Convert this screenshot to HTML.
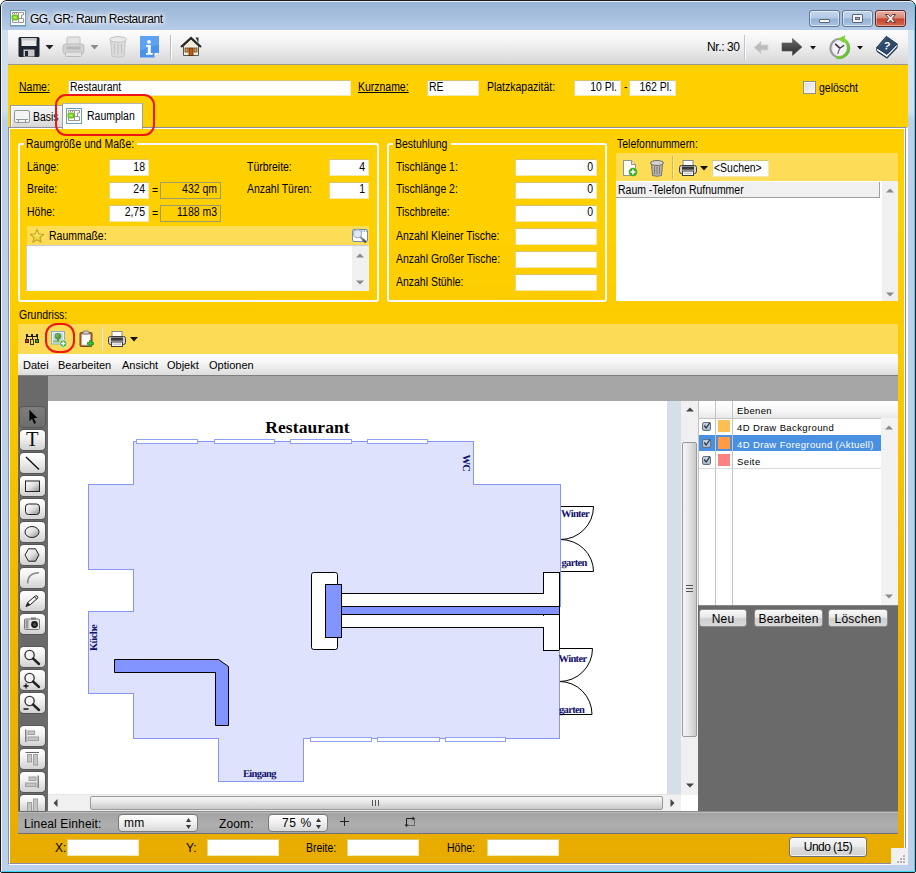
<!DOCTYPE html>
<html>
<head>
<meta charset="utf-8">
<title>GG, GR: Raum Restaurant</title>
<style>
*{box-sizing:border-box;margin:0;padding:0}
html,body{width:916px;height:873px;overflow:hidden;background:#fff}
body{font-family:"Liberation Sans",sans-serif;font-size:11px;color:#000;position:relative}
.a{position:absolute}
.t{position:absolute;white-space:nowrap;margin-top:1px;line-height:13px;height:13px;font-size:12px;transform:scaleX(.872);transform-origin:0 0}
.in{position:absolute;background:#fff;border:1px solid #f4e9b0;border-top-color:#d9c36a;border-left-color:#e6d489;font-size:12px;line-height:12px;white-space:nowrap;overflow:hidden}
.in>i,.ro>i{display:block;font-style:normal;transform:scaleX(.872)}
.r>i,.ro>i{transform-origin:100% 0}
.l>i{transform-origin:0 0}
.r{text-align:right;padding-right:3px}
.l{padding-left:1px}
.ro{position:absolute;border:1px solid #a39a6a;font-size:12px;line-height:12px;text-align:right;padding-right:3px;white-space:nowrap}
#win{left:0;top:0;width:916px;height:873px;border-radius:7px 7px 2px 2px;background:linear-gradient(#98b2d4 0px,#b6cde9 30px,#bcd1e9 120px,#bcd1e9 873px);border:1px solid #1a1a1a;overflow:hidden}
#client{left:8px;top:30px;width:900px;height:835px;background:linear-gradient(#ffd000 0px,#ffd000 200px,#f8c800 380px,#eeb600 600px,#e8ac00 835px)}
</style>
</head>
<body>
<div id="win" class="a"></div>
<div class="a" style="left:1px;top:1px;width:914px;height:871px;border-radius:6px 6px 1px 1px;border:1px solid rgba(255,255,255,.8);border-right-color:#38d8f8;border-bottom-color:#38d8f8"></div>
<div class="a" style="left:908px;top:30px;width:6px;height:90px;background:linear-gradient(#d6e3f2,#d4e1f1 90%,#bcd1e9)"></div>
<div class="a" style="left:2px;top:30px;width:6px;height:90px;background:linear-gradient(#d0dff0,#cfdef0 90%,#bcd1e9)"></div>
<div id="client" class="a">
<!--TOOLBAR-->
<div class="a" style="left:0;top:0;width:900px;height:35px;background:linear-gradient(#fdfdfd 0,#f3f3f3 35%,#e2e2e2 75%,#d6d6d6 100%);border-bottom:1px solid #8e8e8e"></div>
<div class="a" style="left:0;top:34px;width:900px;height:1px;background:#9a9a8a"></div>
<!-- floppy -->
<svg class="a" style="left:10px;top:6px" width="23" height="22" viewBox="0 0 23 22"><rect x=".5" y="1" width="21" height="20" rx="1.500" fill="#1d2532"/><rect x="3.500" y="2" width="15" height="8" fill="#e9e9e9"/><rect x="3.500" y="2" width="15" height="2.500" fill="#c9c9c9"/><rect x="5.500" y="13.500" width="11" height="7" fill="#c8c8c8"/><rect x="7" y="15" width="3" height="5" fill="#1d2532"/></svg>
<svg class="a" style="left:37px;top:15px" width="9" height="5" viewBox="0 0 9 5"><path d="M.5 0H8.500L4.500 4.500Z" fill="#222"/></svg>
<!-- printer grey -->
<svg class="a" style="left:54px;top:6px" width="23" height="22" viewBox="0 0 23 22"><rect x="5" y="1" width="13" height="9" rx="1" fill="#e4e4e4" stroke="#c2c2c2"/><rect x="1" y="8" width="21" height="10" rx="3" fill="#d2d2d2" stroke="#bdbdbd"/><rect x="4.500" y="10.500" width="14" height="3" fill="#b9b9b9"/><rect x="3.500" y="16" width="16" height="4.500" rx="1" fill="#e2e2e2" stroke="#bbb"/></svg>
<svg class="a" style="left:82px;top:15px" width="9" height="5" viewBox="0 0 9 5"><path d="M.5 0H8.500L4.500 4.500Z" fill="#8c8c8c"/></svg>
<!-- trash grey -->
<svg class="a" style="left:100px;top:5px" width="20" height="23" viewBox="0 0 20 23"><path d="M2.500 5L4 21.500Q10 23 16 21.500L17.500 5Z" fill="#dcdcdc" stroke="#c4c4c4"/><ellipse cx="10" cy="4.500" rx="8.500" ry="2.800" fill="#e9e9e9" stroke="#c0c0c0"/><path d="M6.500 9V19M10 9V19.500M13.500 9V19" stroke="#c3c3c3" stroke-width="1.200"/></svg>
<!-- info -->
<svg class="a" style="left:132px;top:6px" width="20" height="22" viewBox="0 0 20 22"><path d="M0 0H19V17L14.500 21.500H0Z" fill="#4b93ea"/><path d="M19 17H14.500V21.500Z" fill="#f2f6fb"/><path d="M0 0H19V9Q9 10 0 15Z" fill="#5ea2f2"/><circle cx="9" cy="5.800" r="1.900" fill="#fff"/><path d="M6 9H10.800V17H12.800V18.800H6V17H7.800V10.800H6Z" fill="#fff"/></svg>
<div class="a" style="left:162px;top:5px;width:1px;height:25px;background:#bdbdbd;border-right:1px solid #fbfbfb;box-sizing:content-box"></div>
<!-- home -->
<svg class="a" style="left:172px;top:6px" width="22" height="21" viewBox="0 0 22 21"><path d="M15.500 1.500H18.500V7Z" fill="#333"/><path d="M3.500 10V19.500H18.500V10L11 3Z" fill="#f3ecd8" stroke="#555" stroke-width="1"/><path d="M1 11L11 2L21 11" fill="none" stroke="#2a2a2a" stroke-width="2.200" stroke-linejoin="miter"/><rect x="9" y="12" width="4" height="7.500" fill="#c85a10" stroke="#5a2a08" stroke-width=".8"/><rect x="5" y="12" width="3" height="4" fill="#d59a4e" stroke="#5a3a18" stroke-width=".7"/><rect x="14" y="12" width="3" height="4" fill="#d59a4e" stroke="#5a3a18" stroke-width=".7"/></svg>
<!-- right side -->
<div class="a" style="left:699px;top:10px;font-size:12px;line-height:15px;letter-spacing:-.4px;white-space:nowrap">Nr.: 30</div>
<div class="a" style="left:736px;top:5px;width:1px;height:25px;background:#c4c4c4;border-right:1px solid #fbfbfb;box-sizing:content-box"></div>
<svg class="a" style="left:745px;top:10px" width="16" height="15" viewBox="0 0 16 15"><path d="M1 7.500L8 1.500V5H15V10H8V13.500Z" fill="#bcbcbc" stroke="#d3d3d3" stroke-width=".8"/></svg>
<svg class="a" style="left:773px;top:7px" width="22" height="20" viewBox="0 0 22 20"><defs><linearGradient id="ga" x1="0" y1="0" x2="0" y2="1"><stop offset="0" stop-color="#6a6a6a"/><stop offset="1" stop-color="#2c2c2c"/></linearGradient></defs><path d="M21 10L11.500 1.500V6H1V14H11.500V18.500Z" fill="url(#ga)" stroke="#555" stroke-width=".6"/></svg>
<svg class="a" style="left:802px;top:16px" width="6" height="4" viewBox="0 0 6 4"><path d="M0 0H6L3 3.500Z" fill="#111"/></svg>
<!-- clock -->
<svg class="a" style="left:820px;top:4px" width="25" height="26" viewBox="0 0 25 26"><defs><linearGradient id="cg" x1="0" y1="0" x2="1" y2="1"><stop offset="0" stop-color="#9be255"/><stop offset="1" stop-color="#5cba28"/></linearGradient></defs><circle cx="11.800" cy="14.200" r="9.300" fill="#f4f2f8" stroke="#9a9a9a" stroke-width="2.400"/><circle cx="11.800" cy="14.200" r="7.800" fill="none" stroke="#e4dcf0" stroke-width="1"/><path d="M8.500 23.600A10 10 0 0 0 15.200 5" fill="none" stroke="url(#cg)" stroke-width="3"/><path d="M17 1.200L9.800 4.800L16.200 9.300Z" fill="#7fd43a"/><path d="M11.800 14.200L7.200 9.800" stroke="#3a3a3a" stroke-width="1.700"/><path d="M11.800 14.200L16.200 11.200" stroke="#3a3a3a" stroke-width="1.300"/><path d="M11.800 14.200L9.600 20" stroke="#666" stroke-width="1.200"/></svg>
<svg class="a" style="left:849px;top:16px" width="6" height="4" viewBox="0 0 6 4"><path d="M0 0H6L3 3.500Z" fill="#111"/></svg>
<!-- book -->
<svg class="a" style="left:867px;top:5px" width="24" height="24" viewBox="0 0 24 24"><path d="M1.600 12.600L12 19.300L22.200 8.900V12L12 22.800L1.600 15.800Z" fill="#f1f4f7" stroke="#27425e" stroke-width=".9"/><path d="M2 16.200L12 23L22.200 12.200" fill="none" stroke="#27425e" stroke-width="1.300"/><path d="M1.600 12.600L11.300 1.300L22.200 8.900L12 19.300Z" fill="#2d4b6c" stroke="#21384f" stroke-width=".9"/><path d="M3.500 12.300L11.500 3" stroke="#41627f" stroke-width="1"/><text x="9" y="14.300" font-family="Liberation Sans" font-weight="bold" font-size="10.500" fill="#fff" transform="rotate(10 12 10)">?</text></svg>

<!--FORM-->
<div class="t" style="left:11px;top:50px;text-decoration:underline">Name:</div>
<div class="in l" style="left:60px;top:50px;width:283px;height:16px"><i>Restaurant</i></div>
<div class="t" style="left:350px;top:50px;text-decoration:underline">Kurzname:</div>
<div class="in l" style="left:419px;top:50px;width:52px;height:16px"><i>RE</i></div>
<div class="t" style="left:479px;top:50px">Platzkapazität:</div>
<div class="in r" style="left:566px;top:50px;width:47px;height:16px"><i>10 Pl.</i></div>
<div class="t" style="left:616px;top:50px">-</div>
<div class="in r" style="left:621px;top:50px;width:47px;height:16px"><i>162 Pl.</i></div>
<div class="a" style="left:795px;top:51px;width:13px;height:13px;border:1px solid #8e8f8f;background:linear-gradient(135deg,#dcdcdc,#f6f6f6);box-shadow:inset 0 0 0 1px #f4f4f4"></div>
<div class="t" style="left:811px;top:51px">gelöscht</div>

<!--TABS-->
<div class="a" style="left:0;top:97px;width:900px;height:738px;border:1px solid #8e8ea2;border-right:2px solid #fff;border-bottom:1px solid #fff"><div class="a" style="left:0;top:0;right:0;bottom:0;border:1px solid #fff;border-right:1px solid #8e8ea2;border-bottom:1px solid #8e8ea2"><div class="a" style="right:0;top:0;width:1px;bottom:0;background:#fff"></div></div></div>
<div class="a" style="left:2px;top:75px;width:53px;height:22px;border:1px solid #9a9a9a;border-bottom:none;background:linear-gradient(#f6f6f6,#ececec 50%,#d6d6d6);box-shadow:inset 1px 1px 0 #fff"></div>
<svg class="a" style="left:6px;top:80px" width="16" height="14" viewBox="0 0 16 14"><rect x=".5" y=".5" width="15" height="12" rx="1.500" fill="#f4f4f4" stroke="#8f9a9a"/><path d="M2 9.500H14M4.500 9.500V12M11.500 9.500V12" stroke="#8f9a9a"/></svg>
<div class="t" style="left:25px;top:80px">Basis</div>
<div class="a" style="left:54px;top:73px;width:81px;height:26px;border:1px solid #9c9c9c;border-top-color:#b2b2b2;border-bottom:none;background:#fff"></div>
<div class="a" style="left:58px;top:78px;width:16px;height:16px;background:#fff;border:1px solid #6b9dba">
<svg class="a" style="left:0;top:0" width="14" height="14" viewBox="0 0 14 14"><path d="M1.500 3.500V1.500H7.500V11.500H1.500V9M3.500 1.500V3M5.500 1.500V3M7.500 1.500H12.500V4H10.500V7.500H8M7.500 7.500H12.500V11.500H7.500" fill="none" stroke="#9a9796" stroke-width="1"/><rect x="1" y="4" width="6" height="5" rx="1.300" fill="#7fd321" stroke="#5aa811" stroke-width=".8"/><rect x="2.500" y="5.500" width="3" height="2" fill="#b5f060"/></svg></div>
<div class="t" style="left:79px;top:79px">Raumplan</div>
<div class="a" style="left:47px;top:64px;width:100px;height:42px;border:2px solid #f01414;border-radius:11px"></div>

<!--GROUPS-->
<!-- group 1 -->
<div class="a" style="left:10px;top:113px;width:361px;height:159px;border:2px solid #f6f8ff;border-radius:3px"></div>
<div class="a" style="left:16px;top:107px;width:113px;height:14px;background:#ffd000"></div>
<div class="t" style="left:18px;top:107px">Raumgröße und Maße:</div>
<div class="t" style="left:19px;top:130px">Länge:</div>
<div class="in r" style="left:101px;top:129px;width:40px;height:17px;padding-top:1px"><i>18</i></div>
<div class="t" style="left:19px;top:152px">Breite:</div>
<div class="in r" style="left:101px;top:152px;width:40px;height:17px;padding-top:0px"><i>24</i></div>
<div class="t" style="left:144px;top:153px">=</div>
<div class="ro" style="left:152px;top:152px;width:61px;height:17px;padding-top:0px"><i>432 qm</i></div>
<div class="t" style="left:19px;top:175px">Höhe:</div>
<div class="in r" style="left:101px;top:175px;width:40px;height:17px;padding-top:0px"><i>2,75</i></div>
<div class="t" style="left:144px;top:176px">=</div>
<div class="ro" style="left:152px;top:175px;width:61px;height:17px;padding-top:0px"><i>1188 m3</i></div>
<div class="t" style="left:239px;top:130px">Türbreite:</div>
<div class="in r" style="left:321px;top:129px;width:40px;height:17px;padding-top:1px"><i>4</i></div>
<div class="t" style="left:239px;top:152px">Anzahl Türen:</div>
<div class="in r" style="left:321px;top:152px;width:40px;height:17px;padding-top:0px"><i>1</i></div>
<div class="a" style="left:19px;top:196px;width:342px;height:19px;background:#fddc58"></div>
<svg class="a" style="left:21px;top:198px" width="16" height="16" viewBox="0 0 16 16"><defs><linearGradient id="sg" x1="0" y1="0" x2="0" y2="1"><stop offset="0" stop-color="#fff68a"/><stop offset="1" stop-color="#e2cc18"/></linearGradient></defs><path d="M8 1.500L9.900 6L14.600 6.400L11 9.500L12.200 14.300L8 11.700L3.800 14.300L5 9.500L1.400 6.400L6.100 6Z" fill="url(#sg)" stroke="#c6a326" stroke-width="1.100" stroke-linejoin="round"/></svg>
<div class="t" style="left:41px;top:199px">Raummaße:</div>
<svg class="a" style="left:344px;top:198px" width="17" height="16" viewBox="0 0 17 16"><rect x=".5" y="1.500" width="15" height="12" rx="1.500" fill="#fdfdfd" stroke="#6e8fb3"/><path d="M1.500 3H15" stroke="#8aa6c6" stroke-width="1.400" stroke-dasharray="1.500 1"/><circle cx="5.500" cy="5.800" r="4" fill="#dfeaf7" stroke="#a4aebb" stroke-width="1.100"/><path d="M8.500 9L13.500 14" stroke="#8a8f96" stroke-width="2.200"/><path d="M11 11.500L14 14.500" stroke="#55595e" stroke-width="2.200"/></svg>
<div class="a" style="left:18px;top:215px;width:343px;height:46px;background:#fff;border:1px solid #c9cbd6;border-right-color:#f1f1f6;border-bottom-color:#f1f1f6"></div>
<div class="a" style="left:344px;top:216px;width:16px;height:44px;background:#f0f0f0"></div>
<svg class="a" style="left:348px;top:223px" width="8" height="5" viewBox="0 0 8 5"><path d="M0 4.500H8L4 .5Z" fill="#8a8a8a"/></svg>
<svg class="a" style="left:348px;top:250px" width="8" height="5" viewBox="0 0 8 5"><path d="M0 .5H8L4 4.500Z" fill="#8a8a8a"/></svg>
<!-- group 2 -->
<div class="a" style="left:379px;top:113px;width:220px;height:159px;border:2px solid #f6f8ff;border-radius:3px"></div>
<div class="a" style="left:385px;top:107px;width:58px;height:14px;background:#ffd000"></div>
<div class="t" style="left:387px;top:107px">Bestuhlung</div>
<div class="t" style="left:388px;top:130px">Tischlänge 1:</div>
<div class="in r" style="left:507px;top:129px;width:82px;height:17px;padding-top:1px"><i>0</i></div>
<div class="t" style="left:388px;top:152px">Tischlänge 2:</div>
<div class="in r" style="left:507px;top:152px;width:82px;height:17px;padding-top:0px"><i>0</i></div>
<div class="t" style="left:388px;top:175px">Tischbreite:</div>
<div class="in r" style="left:507px;top:175px;width:82px;height:17px;padding-top:0px"><i>0</i></div>
<div class="t" style="left:388px;top:199px">Anzahl Kleiner Tische:</div>
<div class="in r" style="left:507px;top:198px;width:82px;height:17px"></div>
<div class="t" style="left:388px;top:222px">Anzahl Großer Tische:</div>
<div class="in r" style="left:507px;top:221px;width:82px;height:17px"></div>
<div class="t" style="left:388px;top:245px">Anzahl Stühle:</div>
<div class="in r" style="left:507px;top:244px;width:82px;height:17px"></div>
<!-- telefon -->
<div class="t" style="left:609px;top:107px">Telefonnummern:</div>
<div class="a" style="left:608px;top:123px;width:282px;height:29px;background:#fddc58"></div>
<svg class="a" style="left:614px;top:129px" width="16" height="18" viewBox="0 0 16 18"><path d="M1.500 1.500H9.500L13.500 5.500V16.500H1.500Z" fill="#fdfdf6" stroke="#8f9682"/><path d="M9.500 1.500V5.500H13.500" fill="#e2e6d4" stroke="#8f9682"/><circle cx="11" cy="13" r="4.300" fill="#3fae2a"/><path d="M11 10.500V15.500M8.500 13H13.500" stroke="#fff" stroke-width="1.600"/></svg>
<svg class="a" style="left:641px;top:129px" width="16" height="18" viewBox="0 0 16 18"><path d="M2.500 5L3.500 16.500Q8 18 12.500 16.500L13.500 5Z" fill="#b9b4ad" stroke="#77726c"/><ellipse cx="8" cy="4" rx="6.500" ry="2.500" fill="#d6d2cc" stroke="#6f6a64"/><path d="M5.500 7.500V15M8 7.500V15.500M10.500 7.500V15" stroke="#7d7872" stroke-width="1"/></svg>
<div class="a" style="left:664px;top:126px;width:1px;height:23px;background:#d9b94a;border-right:1px solid #fde99a;box-sizing:content-box"></div>
<svg class="a" style="left:671px;top:130px" width="18" height="16" viewBox="0 0 18 16"><rect x="4" y=".5" width="10" height="6" fill="#fdfdfd" stroke="#8a8a8a"/><rect x=".5" y="5.500" width="17" height="8" rx="2" fill="#d4d4d4" stroke="#3c3c3c"/><rect x="3" y="6.500" width="12" height="3.200" fill="#3a3a3a"/><rect x="3.500" y="11" width="11" height="4.500" fill="#f6f6f6" stroke="#3c3c3c"/><path d="M5 13.200H13" stroke="#aaa" stroke-width=".8"/></svg>
<svg class="a" style="left:692px;top:136px" width="8" height="5" viewBox="0 0 8 5"><path d="M0 0H8L4 4.500Z" fill="#111"/></svg>
<div class="in l" style="left:704px;top:130px;width:57px;height:17px;padding-left:1px;padding-top:1px"><i>&lt;Suchen&gt;</i></div>
<div class="a" style="left:608px;top:151px;width:282px;height:120px;background:#fff"></div>
<div class="a" style="left:608px;top:152px;width:264px;height:16px;background:#f0f0f0;border-bottom:1px solid #a0a0a0;border-right:1px solid #a0a0a0"></div>
<div class="t" style="left:610px;top:153px">Raum -Telefon Rufnummer</div>
<div class="a" style="left:874px;top:151px;width:16px;height:120px;background:#f0f0f0"></div>
<svg class="a" style="left:878px;top:158px" width="8" height="5" viewBox="0 0 8 5"><path d="M0 4.500H8L4 .5Z" fill="#8a8a8a"/></svg>
<svg class="a" style="left:878px;top:262px" width="8" height="5" viewBox="0 0 8 5"><path d="M0 .5H8L4 4.500Z" fill="#8a8a8a"/></svg>
<!-- grundriss -->
<div class="t" style="left:11px;top:278px">Grundriss:</div>

<!--MAIN-->
<div class="a" style="left:10px;top:294px;width:880px;height:30px;background:#fbda56"></div>
<!-- grundriss toolbar icons -->
<svg class="a" style="left:17px;top:303px" width="15" height="13" viewBox="0 0 15 13" shape-rendering="crispEdges"><path d="M1.500 6V3.500H12.500V6M7 3.500V6" fill="none" stroke="#1a1a1a" stroke-width="1"/><rect x="1" y="1" width="2" height="2" fill="#1a1a1a"/><rect x="6" y="1" width="2" height="2" fill="#1a1a1a"/><rect x="11" y="1" width="2" height="2" fill="#1a1a1a"/><rect x=".5" y="6.500" width="3" height="3" fill="#ee2020" stroke="#3a2a1a" stroke-width="1"/><rect x="5.500" y="6.500" width="3" height="5" fill="#f5e010" stroke="#3a2a1a" stroke-width="1"/><rect x="10.500" y="6.500" width="3" height="3" fill="#20b030" stroke="#3a2a1a" stroke-width="1"/></svg>
<svg class="a" style="left:42px;top:300px" width="18" height="18" viewBox="0 0 18 18"><rect x="1.500" y="1.500" width="13" height="12.500" fill="#e6effa" stroke="#8ea8c8"/><rect x="3" y="3" width="10" height="9.500" fill="#bfd8f3"/><rect x="3" y="10.300" width="10" height="2.200" fill="#8cc36a"/><rect x="7.300" y="8.500" width="1.500" height="2.800" fill="#8a6a3a"/><circle cx="8" cy="6.300" r="3.300" fill="#5a9a3a"/><circle cx="7.300" cy="5.500" r="1.600" fill="#74b44e"/><circle cx="13.300" cy="13.600" r="3.700" fill="#4aa83a" stroke="#e8f4e0" stroke-width=".8"/><path d="M13.300 11.400V15.800M11.100 13.600H15.500" stroke="#fff" stroke-width="1.500"/></svg>
<svg class="a" style="left:71px;top:300px" width="16" height="18" viewBox="0 0 16 18"><rect x="1" y="2.500" width="12" height="14" rx="1.200" fill="#b3602a" stroke="#7a4518"/><rect x="2.800" y="4.500" width="8.400" height="10.500" fill="#fbfbfb" stroke="#cfcfcf" stroke-width=".6"/><rect x="4" y="1" width="6" height="3" rx="1" fill="#c9c9c9" stroke="#777" stroke-width=".8"/><path d="M10.500 10.500H12.500V12.500H14.500V14.500H12.500V16.500H10.500V14.500H8.500V12.500H10.500Z" fill="#35c435" stroke="#1b8a1b" stroke-width=".8"/></svg>
<div class="a" style="left:93px;top:297px;width:1px;height:24px;background:#e9d089;border-right:1px solid #f4ecd2;box-sizing:content-box"></div>
<svg class="a" style="left:100px;top:301px" width="18" height="16" viewBox="0 0 18 16"><rect x="4" y=".5" width="10" height="6" fill="#fdfdfd" stroke="#8a8a8a"/><rect x=".5" y="5.500" width="17" height="8" rx="2" fill="#d4d4d4" stroke="#3c3c3c"/><rect x="3" y="6.500" width="12" height="3.200" fill="#3a3a3a"/><rect x="3.500" y="11" width="11" height="4.500" fill="#f6f6f6" stroke="#3c3c3c"/><path d="M5 13.200H13" stroke="#aaa" stroke-width=".8"/></svg>
<svg class="a" style="left:122px;top:307px" width="8" height="5" viewBox="0 0 8 5"><path d="M0 0H8L4 4.500Z" fill="#111"/></svg>
<div class="a" style="left:37px;top:293px;width:30px;height:30px;border:2px solid #f01414;border-radius:12px"></div>
<!-- menubar -->
<div class="a" style="left:10px;top:324px;width:880px;height:22px;background:linear-gradient(#ffffff 0,#f6f6f6 40%,#dcdcdc 100%);border-bottom:1px solid #7f7f7f"></div>
<div class="a" style="left:15px;top:329px;font-size:11px;line-height:13px;white-space:nowrap;word-spacing:0">Datei</div>
<div class="a" style="left:50px;top:329px;font-size:11px;line-height:13px;white-space:nowrap">Bearbeiten</div>
<div class="a" style="left:114px;top:329px;font-size:11px;line-height:13px;white-space:nowrap">Ansicht</div>
<div class="a" style="left:159px;top:329px;font-size:11px;line-height:13px;white-space:nowrap">Objekt</div>
<div class="a" style="left:201px;top:329px;font-size:11px;line-height:13px;white-space:nowrap">Optionen</div>
<!-- grey area -->
<div class="a" style="left:10px;top:346px;width:880px;height:457px;background:#6a6a6a"></div>
<div class="a" style="left:40px;top:346px;width:850px;height:25px;background:#a6a6a6"></div>
<div class="a" style="left:10px;top:781px;width:880px;height:23px;background:linear-gradient(#bcbcbc 0,#bcbcbc 1px,#a3a3a3 1px,#aeaeae 60%,#a6a6a6 100%);border-top:1px solid #8c8c8c;border-bottom:1px solid #70707c"></div>
<!-- canvas -->
<div class="a" style="left:40px;top:371px;width:619px;height:394px;background:#fff"></div>
<div class="a" style="left:659px;top:371px;width:14px;height:394px;background:#d6deea"></div>
<!--PLAN-->
<svg class="a" style="left:40px;top:371px" width="634" height="394" viewBox="48 401 634 394" shape-rendering="crispEdges">
<path d="M133.500 441.500H473.500V484.500H560.500V606.500H559.500V738.500H303.500V781.500H218.500V738.500H133.500V693.500H88.500V611.500H133.500V569.500H88.500V484.500H133.500Z" fill="#dee2fd" stroke="#8596f6" stroke-width="1"/>
<g fill="#fff" stroke="#8fa0f6" stroke-width="1">
<rect x="136.500" y="439.500" width="61" height="4"/><rect x="214.500" y="439.500" width="60" height="4"/><rect x="290.500" y="439.500" width="61" height="4"/><rect x="367.500" y="439.500" width="60" height="4"/>
<rect x="310.500" y="737.500" width="61" height="4"/><rect x="377.500" y="737.500" width="62" height="4"/><rect x="445.500" y="737.500" width="60" height="4"/>
</g>
<!-- bar -->
<rect x="311.500" y="572.500" width="26" height="77" rx="2.200" fill="#fff" stroke="#000" shape-rendering="auto"/>
<path d="M341.500 593.500H543.500V572.500H559.500V650.500H543.500V627.500H341.500Z" fill="#fff" stroke="#000"/>
<rect x="342" y="607" width="218" height="7" fill="#8294ff"/>
<path d="M342 606.500H560M342 614.500H560M543.500 614V616M559.500 572V651" stroke="#000" fill="none"/>
<rect x="325.500" y="584.500" width="16" height="53" fill="#8294ff" stroke="#000"/>
<!-- L -->
<path d="M114.500 659.500H218.500L228.500 666.500V725.500H215.500V672.500H114.500Z" fill="#8294ff" stroke="#000" shape-rendering="auto"/>
<!-- doors -->
<g fill="#fff" stroke="#000" shape-rendering="auto">
<path d="M560.500 506.500H593.500A33 33 0 0 1 560.500 539.500Z"/>
<path d="M560.500 571.500H593.500A33 32 0 0 0 560.500 539.500Z"/>
<path d="M559.500 648.500H592.500A33 33 0 0 1 559.500 681.500Z"/>
<path d="M559.500 714.500H592A32.500 33 0 0 0 559.500 681.500Z"/>
</g>
<path d="M560.500 506V606M559.500 650V715" stroke="#8596f6"/>
<g font-family="Liberation Serif" font-weight="bold" fill="#10106a" font-size="10.500" letter-spacing="-.65" text-rendering="geometricPrecision">
<text x="561" y="517">Winter</text><text x="561.500" y="566">garten</text>
<text x="558.500" y="661.500">Winter</text><text x="559" y="712.500">garten</text>
<text x="243" y="776.500">Eingang</text>
<text transform="translate(462.500 454.500) rotate(90)">WC</text>
<text transform="translate(96.500 651) rotate(-90)">Küche</text>
</g>
<text x="307.500" y="433" text-anchor="middle" font-family="Liberation Serif" font-weight="bold" font-size="17.500" fill="#000" letter-spacing=".1">Restaurant</text>
</svg>

<!-- tools -->
<div class="a" style="left:12px;top:377px;width:25px;height:20px;border-radius:4px;background:linear-gradient(#7d7d7d,#747474 60%,#6c6c6c);box-shadow:0 0 0 1px rgba(70,70,70,.55);overflow:hidden"><svg class="a" style="left:0;top:0" width="25" height="20" viewBox="0 0 25 20"><path d="M9.400 2.800V14.200L12 11.700L14.100 16.700L16 15.900L13.900 11H17.400Z" fill="#050505"/></svg></div>
<div class="a" style="left:12px;top:400px;width:25px;height:20px;border-radius:4px;background:linear-gradient(#ffffff 0,#f2f2f2 40%,#dedede 75%,#d2d2d2 100%);box-shadow:0 0 0 1px rgba(60,60,60,.45);overflow:hidden"><svg class="a" style="left:0;top:0" width="25" height="20" viewBox="0 0 25 20"><text x="12.300" y="16.200" text-anchor="middle" font-family="Liberation Serif" font-size="20.500" fill="#111">T</text></svg></div>
<div class="a" style="left:12px;top:423px;width:25px;height:20px;border-radius:4px;background:linear-gradient(#ffffff 0,#f2f2f2 40%,#dedede 75%,#d2d2d2 100%);box-shadow:0 0 0 1px rgba(60,60,60,.45);overflow:hidden"><svg class="a" style="left:0;top:0" width="25" height="20" viewBox="0 0 25 20"><path d="M6 4L19 16.400" stroke="#111" stroke-width="1.400"/></svg></div>
<div class="a" style="left:12px;top:446px;width:25px;height:20px;border-radius:4px;background:linear-gradient(#ffffff 0,#f2f2f2 40%,#dedede 75%,#d2d2d2 100%);box-shadow:0 0 0 1px rgba(60,60,60,.45);overflow:hidden"><svg class="a" style="left:0;top:0" width="25" height="20" viewBox="0 0 25 20"><defs><linearGradient id="gr3" x1="0" y1="0" x2="1" y2="1"><stop offset="0" stop-color="#fff"/><stop offset=".5" stop-color="#e0e0e0"/><stop offset="1" stop-color="#8a8a8a"/></linearGradient></defs><rect x="5.500" y="5" width="14" height="10.500" fill="url(#gr3)" stroke="#222"/></svg></div>
<div class="a" style="left:12px;top:469px;width:25px;height:20px;border-radius:4px;background:linear-gradient(#ffffff 0,#f2f2f2 40%,#dedede 75%,#d2d2d2 100%);box-shadow:0 0 0 1px rgba(60,60,60,.45);overflow:hidden"><svg class="a" style="left:0;top:0" width="25" height="20" viewBox="0 0 25 20"><defs><linearGradient id="gr4" x1="0" y1="0" x2="1" y2="1"><stop offset="0" stop-color="#fff"/><stop offset=".5" stop-color="#e0e0e0"/><stop offset="1" stop-color="#8a8a8a"/></linearGradient></defs><rect x="5.500" y="5" width="14" height="10.500" rx="3" fill="url(#gr4)" stroke="#222"/></svg></div>
<div class="a" style="left:12px;top:492px;width:25px;height:20px;border-radius:4px;background:linear-gradient(#ffffff 0,#f2f2f2 40%,#dedede 75%,#d2d2d2 100%);box-shadow:0 0 0 1px rgba(60,60,60,.45);overflow:hidden"><svg class="a" style="left:0;top:0" width="25" height="20" viewBox="0 0 25 20"><defs><linearGradient id="gr5" x1="0" y1="0" x2="1" y2="1"><stop offset="0" stop-color="#fff"/><stop offset=".5" stop-color="#e0e0e0"/><stop offset="1" stop-color="#8a8a8a"/></linearGradient></defs><ellipse cx="12" cy="10" rx="7" ry="5.500" fill="url(#gr5)" stroke="#222"/></svg></div>
<div class="a" style="left:12px;top:515px;width:25px;height:20px;border-radius:4px;background:linear-gradient(#ffffff 0,#f2f2f2 40%,#dedede 75%,#d2d2d2 100%);box-shadow:0 0 0 1px rgba(60,60,60,.45);overflow:hidden"><svg class="a" style="left:0;top:0" width="25" height="20" viewBox="0 0 25 20"><defs><linearGradient id="gr6" x1="0" y1="0" x2="1" y2="1"><stop offset="0" stop-color="#fff"/><stop offset=".5" stop-color="#e0e0e0"/><stop offset="1" stop-color="#8a8a8a"/></linearGradient></defs><path d="M8.500 3.800H15.500L19 10L15.500 16.200H8.500L5 10Z" fill="url(#gr6)" stroke="#222"/></svg></div>
<div class="a" style="left:12px;top:538px;width:25px;height:20px;border-radius:4px;background:linear-gradient(#ffffff 0,#f2f2f2 40%,#dedede 75%,#d2d2d2 100%);box-shadow:0 0 0 1px rgba(60,60,60,.45);overflow:hidden"><svg class="a" style="left:0;top:0" width="25" height="20" viewBox="0 0 25 20"><path d="M7.600 15.500Q7.600 5 19 4.800" fill="none" stroke="#8a8a8a" stroke-width="1.500"/></svg></div>
<div class="a" style="left:12px;top:561px;width:25px;height:20px;border-radius:4px;background:linear-gradient(#ffffff 0,#f2f2f2 40%,#dedede 75%,#d2d2d2 100%);box-shadow:0 0 0 1px rgba(60,60,60,.45);overflow:hidden"><svg class="a" style="left:0;top:0" width="25" height="20" viewBox="0 0 25 20"><path d="M6 15.500L7.800 11.300L15.500 4.800Q17.500 4.200 18 6.800L10.200 13.800Z" fill="#f4f4f4" stroke="#222" stroke-width="1"/><path d="M6 15.500L7.800 11.300L10.200 13.800Z" fill="#222"/><path d="M14.300 5.800L16.800 8" stroke="#222" stroke-width="1"/></svg></div>
<div class="a" style="left:12px;top:584px;width:25px;height:20px;border-radius:4px;background:linear-gradient(#ffffff 0,#f2f2f2 40%,#dedede 75%,#d2d2d2 100%);box-shadow:0 0 0 1px rgba(60,60,60,.45);overflow:hidden"><svg class="a" style="left:0;top:0" width="25" height="20" viewBox="0 0 25 20"><rect x="4.500" y="5" width="15" height="10.500" rx="1" fill="#e2e2e2" stroke="#777"/><rect x="5.500" y="6" width="3" height="8.500" fill="#999"/><rect x="11" y="3.500" width="5" height="2" fill="#777"/><circle cx="14.500" cy="10.500" r="3.400" fill="#1a1a1a"/><circle cx="14.500" cy="10.500" r="1.500" fill="#555"/></svg></div>
<div class="a" style="left:12px;top:617px;width:25px;height:20px;border-radius:4px;background:linear-gradient(#ffffff 0,#f2f2f2 40%,#dedede 75%,#d2d2d2 100%);box-shadow:0 0 0 1px rgba(60,60,60,.45);overflow:hidden"><svg class="a" style="left:0;top:0" width="25" height="20" viewBox="0 0 25 20"><circle cx="9.600" cy="8" r="4.600" fill="#f2f2f2" stroke="#3a3a3a" stroke-width="1.400"/><path d="M7 6.500A3 3 0 0 1 11 5.500" fill="none" stroke="#fff" stroke-width="1"/><path d="M13 11.500L19 17" stroke="#222" stroke-width="2.400" stroke-linecap="round"/></svg></div>
<div class="a" style="left:12px;top:640px;width:25px;height:20px;border-radius:4px;background:linear-gradient(#ffffff 0,#f2f2f2 40%,#dedede 75%,#d2d2d2 100%);box-shadow:0 0 0 1px rgba(60,60,60,.45);overflow:hidden"><svg class="a" style="left:0;top:0" width="25" height="20" viewBox="0 0 25 20"><circle cx="9.600" cy="8" r="4.600" fill="#f2f2f2" stroke="#3a3a3a" stroke-width="1.400"/><path d="M7 6.500A3 3 0 0 1 11 5.500" fill="none" stroke="#fff" stroke-width="1"/><path d="M13 11.500L19 17" stroke="#222" stroke-width="2.400" stroke-linecap="round"/><path d="M3.500 16H8.500M6 13.500V18.500" stroke="#111" stroke-width="1.300"/></svg></div>
<div class="a" style="left:12px;top:663px;width:25px;height:20px;border-radius:4px;background:linear-gradient(#ffffff 0,#f2f2f2 40%,#dedede 75%,#d2d2d2 100%);box-shadow:0 0 0 1px rgba(60,60,60,.45);overflow:hidden"><svg class="a" style="left:0;top:0" width="25" height="20" viewBox="0 0 25 20"><circle cx="9.600" cy="8" r="4.600" fill="#f2f2f2" stroke="#3a3a3a" stroke-width="1.400"/><path d="M7 6.500A3 3 0 0 1 11 5.500" fill="none" stroke="#fff" stroke-width="1"/><path d="M13 11.500L19 17" stroke="#222" stroke-width="2.400" stroke-linecap="round"/><path d="M3.500 16H8.500" stroke="#111" stroke-width="1.300"/></svg></div>
<div class="a" style="left:12px;top:696px;width:25px;height:20px;border-radius:4px;background:linear-gradient(#ffffff 0,#f2f2f2 40%,#dedede 75%,#d2d2d2 100%);box-shadow:0 0 0 1px rgba(60,60,60,.45);overflow:hidden"><svg class="a" style="left:0;top:0" width="25" height="20" viewBox="0 0 25 20"><path d="M5.800 3.500V16" stroke="#666" stroke-width="1.200"/><rect x="8" y="5" width="6.500" height="3.500" fill="#c4c4c4" stroke="#a0a0a0"/><rect x="8" y="11" width="10.500" height="3.500" fill="#c4c4c4" stroke="#a0a0a0"/></svg></div>
<div class="a" style="left:12px;top:719px;width:25px;height:20px;border-radius:4px;background:linear-gradient(#ffffff 0,#f2f2f2 40%,#dedede 75%,#d2d2d2 100%);box-shadow:0 0 0 1px rgba(60,60,60,.45);overflow:hidden"><svg class="a" style="left:0;top:0" width="25" height="20" viewBox="0 0 25 20"><path d="M5.500 3.500H19" stroke="#666" stroke-width="1.200"/><rect x="7.500" y="5.500" width="4" height="7.500" fill="#c4c4c4" stroke="#a0a0a0"/><rect x="13.500" y="5.500" width="4" height="10.500" fill="#c4c4c4" stroke="#a0a0a0"/></svg></div>
<div class="a" style="left:12px;top:742px;width:25px;height:20px;border-radius:4px;background:linear-gradient(#ffffff 0,#f2f2f2 40%,#dedede 75%,#d2d2d2 100%);box-shadow:0 0 0 1px rgba(60,60,60,.45);overflow:hidden"><svg class="a" style="left:0;top:0" width="25" height="20" viewBox="0 0 25 20"><path d="M18.200 3.500V16" stroke="#666" stroke-width="1.200"/><rect x="9" y="5" width="7" height="3.500" fill="#c4c4c4" stroke="#a0a0a0"/><rect x="5.500" y="11" width="10.500" height="3.500" fill="#c4c4c4" stroke="#a0a0a0"/></svg></div>
<div class="a" style="left:12px;top:765px;width:25px;height:16px;border-radius:4px 4px 0 0;background:linear-gradient(#ffffff 0,#f2f2f2 40%,#dedede 75%,#d2d2d2 100%);box-shadow:0 0 0 1px rgba(60,60,60,.45);overflow:hidden"><svg class="a" style="left:0;top:0" width="25" height="20" viewBox="0 0 25 20"><rect x="7.500" y="7.500" width="4" height="10" fill="#c4c4c4" stroke="#a0a0a0"/><rect x="13.500" y="4" width="4" height="14" fill="#c4c4c4" stroke="#a0a0a0"/></svg></div>
<div class="a" style="left:40px;top:764px;width:650px;height:17px;background:#f0f0f0;border-top:1px solid #e6e6e6"></div>
<div class="a" style="left:673px;top:764px;width:17px;height:17px;background:#fff"></div>
<div class="a" style="left:673px;top:371px;width:17px;height:394px;background:#f0f0f0"></div>
<svg class="a" style="left:45px;top:769px" width="5" height="8" viewBox="0 0 5 8"><path d="M4.500 0V8L.5 4Z" fill="#444"/></svg>
<svg class="a" style="left:662px;top:769px" width="5" height="8" viewBox="0 0 5 8"><path d="M.5 0V8L4.500 4Z" fill="#444"/></svg>
<div class="a" style="left:82px;top:766px;width:573px;height:14px;border:1px solid #9a9a9a;border-radius:2px;background:linear-gradient(#f6f6f6 0,#e6e6e6 45%,#c9c9c9 100%)"></div>
<div class="a" style="left:364px;top:770px;width:7px;height:6px;background:repeating-linear-gradient(90deg,#555 0,#555 1px,transparent 1px,transparent 3px)"></div>
<svg class="a" style="left:678px;top:377px" width="8" height="5" viewBox="0 0 8 5"><path d="M0 4.500H8L4 .5Z" fill="#444"/></svg>
<svg class="a" style="left:678px;top:753px" width="8" height="5" viewBox="0 0 8 5"><path d="M0 .5H8L4 4.500Z" fill="#444"/></svg>
<div class="a" style="left:674px;top:412px;width:15px;height:295px;border:1px solid #9a9a9a;border-radius:2px;background:linear-gradient(90deg,#f6f6f6 0,#e6e6e6 45%,#c9c9c9 100%)"></div>
<div class="a" style="left:678px;top:555px;width:7px;height:7px;background:repeating-linear-gradient(#555 0,#555 1px,transparent 1px,transparent 3px)"></div>

<!--LAYERS-->
<div class="a" style="left:691px;top:371px;width:199px;height:204px;background:#fff"></div>
<div class="a" style="left:691px;top:371px;width:199px;height:18px;background:linear-gradient(#fff,#f6f6f6 60%,#e8e8e8);border-bottom:1px solid #c4c4c4"></div>
<div class="a" style="left:873px;top:388px;width:17px;height:187px;background:#f2f2f2"></div>
<div class="a" style="left:691px;top:405px;width:182px;height:16px;background:#4a90e0"></div>
<div class="a" style="left:691px;top:438px;width:182px;height:1px;background:#dcdcdc"></div>
<div class="a" style="left:707px;top:371px;width:1px;height:204px;background:#c4c4c4"></div>
<div class="a" style="left:724px;top:371px;width:1px;height:204px;background:#c4c4c4"></div>
<div class="a" style="left:690px;top:371px;width:1px;height:204px;background:#c2c2c2"></div>
<div class="a" style="left:729px;top:374px;font-size:9.500px;line-height:12px;letter-spacing:.38px;white-space:nowrap;margin-top:1px">Ebenen</div>
<div class="a" style="left:729px;top:391px;font-size:9.500px;line-height:12px;letter-spacing:.38px;white-space:nowrap;margin-top:1px">4D Draw Background</div>
<div class="a" style="left:729px;top:408px;font-size:9.500px;line-height:12px;letter-spacing:.38px;white-space:nowrap;margin-top:1px;color:#fff">4D Draw Foreground (Aktuell)</div>
<div class="a" style="left:729px;top:425px;font-size:9.500px;line-height:12px;letter-spacing:.38px;white-space:nowrap;margin-top:1px">Seite</div>
<div class="a" style="left:694px;top:392px;width:9px;height:9px;border:1px solid #66727f;border-radius:2px;background:linear-gradient(#c3d0e0,#a9bbd0)"><svg class="a" style="left:0;top:-1px" width="8" height="8" viewBox="0 0 8 8"><path d="M1.200 3.500L3.200 6L7 .5" fill="none" stroke="#2d3742" stroke-width="1.300"/></svg></div>
<div class="a" style="left:694px;top:409px;width:9px;height:9px;border:1px solid #66727f;border-radius:2px;background:linear-gradient(#c3d0e0,#a9bbd0)"><svg class="a" style="left:0;top:-1px" width="8" height="8" viewBox="0 0 8 8"><path d="M1.200 3.500L3.200 6L7 .5" fill="none" stroke="#2d3742" stroke-width="1.300"/></svg></div>
<div class="a" style="left:694px;top:426px;width:9px;height:9px;border:1px solid #66727f;border-radius:2px;background:linear-gradient(#c3d0e0,#a9bbd0)"><svg class="a" style="left:0;top:-1px" width="8" height="8" viewBox="0 0 8 8"><path d="M1.200 3.500L3.200 6L7 .5" fill="none" stroke="#2d3742" stroke-width="1.300"/></svg></div>
<div class="a" style="left:710px;top:390px;width:12px;height:12px;background:#fdbf52"></div>
<div class="a" style="left:710px;top:407px;width:12px;height:12px;background:#ff9b45"></div>
<div class="a" style="left:710px;top:424px;width:12px;height:12px;background:#ff8282"></div>
<svg class="a" style="left:877px;top:395px" width="8" height="5" viewBox="0 0 8 5"><path d="M0 4.500H8L4 .5Z" fill="#8a8a8a"/></svg>
<svg class="a" style="left:877px;top:564px" width="8" height="5" viewBox="0 0 8 5"><path d="M0 .5H8L4 4.500Z" fill="#8a8a8a"/></svg>
<div class="a" style="left:691px;top:575px;width:199px;height:1px;background:#8a8a8a"></div>
<div class="a" style="left:691px;top:579px;width:48px;height:18px;border:1px solid #8a8a8a;border-radius:3px;background:linear-gradient(#fafafa 0,#e9e9e9 45%,#cfcfcf 55%,#d9d9d9 100%);font-size:12px;line-height:18px;text-align:center;letter-spacing:.2px">Neu</div>
<div class="a" style="left:746px;top:579px;width:69px;height:18px;border:1px solid #8a8a8a;border-radius:3px;background:linear-gradient(#fafafa 0,#e9e9e9 45%,#cfcfcf 55%,#d9d9d9 100%);font-size:12px;line-height:18px;text-align:center;letter-spacing:.2px">Bearbeiten</div>
<div class="a" style="left:820px;top:579px;width:60px;height:18px;border:1px solid #8a8a8a;border-radius:3px;background:linear-gradient(#fafafa 0,#e9e9e9 45%,#cfcfcf 55%,#d9d9d9 100%);font-size:12px;line-height:18px;text-align:center;letter-spacing:.2px">Löschen</div>


<!--BOTTOM-->
<div class="a" style="left:16px;top:787px;font-size:12px;line-height:14px;white-space:nowrap;letter-spacing:.14px">Lineal Einheit:</div>
<div class="a" style="left:110px;top:784px;width:80px;height:18px;border:1px solid #7a7a7a;border-radius:4px;background:linear-gradient(#fefefe 0,#efefef 50%,#d9d9d9 100%);font-size:12px;line-height:17px;padding-left:5px;letter-spacing:.3px">mm<svg class="a" style="right:6px;top:3px" width="5" height="11" viewBox="0 0 5 11"><path d="M0 4H5L2.500 0Z M0 7H5L2.500 11Z" fill="#3a3a3a"/></svg></div>
<div class="a" style="left:211px;top:787px;font-size:12px;line-height:14px;white-space:nowrap;letter-spacing:.14px">Zoom:</div>
<div class="a" style="left:260px;top:784px;width:60px;height:18px;border:1px solid #7a7a7a;border-radius:4px;background:linear-gradient(#fefefe 0,#efefef 50%,#d9d9d9 100%);font-size:12px;line-height:17px;padding-left:13px;letter-spacing:.6px">75 %<svg class="a" style="right:6px;top:3px" width="5" height="11" viewBox="0 0 5 11"><path d="M0 4H5L2.500 0Z M0 7H5L2.500 11Z" fill="#3a3a3a"/></svg></div>
<svg class="a" style="left:332px;top:787px" width="10" height="10" viewBox="0 0 10 10"><path d="M4.500 0V9M0 4.500H9" stroke="#222" stroke-width="1"/></svg>
<svg class="a" style="left:396px;top:786px" width="12" height="12" viewBox="0 0 12 12"><path d="M2.500 9V2.500H9" fill="none" stroke="#222" stroke-width="1"/><path d="M10.500 3.500V9.500H4" fill="none" stroke="#222" stroke-width="1" stroke-dasharray="1 1"/><path d="M.5 8.500H4.500L2.500 11Z M8.500 .5V4.500L11 2.500Z" fill="#222"/></svg>
<div class="a" style="left:47px;top:811px;font-size:12px;line-height:14px">X:</div>
<div class="in" style="left:59px;top:809px;width:72px;height:17px"></div>
<div class="a" style="left:178px;top:811px;font-size:12px;line-height:14px">Y:</div>
<div class="in" style="left:199px;top:809px;width:72px;height:17px"></div>
<div class="t" style="left:298px;top:811px">Breite:</div>
<div class="in" style="left:339px;top:809px;width:72px;height:17px"></div>
<div class="t" style="left:439px;top:811px">Höhe:</div>
<div class="in" style="left:479px;top:809px;width:72px;height:17px"></div>
<div class="a" style="left:781px;top:807px;width:78px;height:20px;border:1px solid #707070;border-radius:3px;background:linear-gradient(#f6f6f6 0,#ececec 48%,#dddddd 52%,#d2d2d2 100%);box-shadow:inset 0 0 0 1px rgba(255,255,255,.7);font-size:12px;letter-spacing:-.55px;line-height:18px;text-align:center">Undo (15)</div>
<svg class="a" style="left:883px;top:818px" width="17" height="17" viewBox="0 0 17 17"><rect width="17" height="17" fill="#f0f0f0"/><g fill="#b4b4b4"><rect x="12" y="7" width="2" height="2"/><rect x="9" y="10" width="2" height="2"/><rect x="12" y="10" width="2" height="2"/><rect x="6" y="13" width="2" height="2"/><rect x="9" y="13" width="2" height="2"/><rect x="12" y="13" width="2" height="2"/></g><g fill="#fff"><rect x="11" y="6" width="1" height="1"/><rect x="8" y="9" width="1" height="1"/><rect x="5" y="12" width="1" height="1"/></g></svg>

</div>
<!--TITLE-->
<div class="a" style="left:10px;top:10px;width:16px;height:16px;background:#fff;border:1px solid #6b9dba;box-shadow:0 1px 0 rgba(90,140,170,.5)">
<svg class="a" style="left:0;top:0" width="14" height="14" viewBox="0 0 14 14"><path d="M1.5 3.5V1.5H7.5V11.5H1.5V9M3.5 1.5V3M5.5 1.5V3M7.5 1.5H12.500V4H10.5V7.500H8M7.500 7.500H12.500V11.5H7.500" fill="none" stroke="#9a9796" stroke-width="1"/><rect x="1" y="4" width="6" height="5" rx="1.3" fill="#7fd321" stroke="#5aa811" stroke-width=".8"/><rect x="2.500" y="5.500" width="3" height="2" fill="#b5f060"/></svg>
</div>
<div class="a" style="left:30px;top:12px;font-size:12px;line-height:15px;letter-spacing:-.5px;white-space:nowrap;color:#000;text-shadow:0 0 6px #fff,0 0 6px #fff,0 0 3px #fff">GG, GR: Raum Restaurant</div>
<!-- window buttons -->
<div class="a" style="left:809px;top:10px;width:31px;height:17px;border:1px solid #5d7794;border-radius:3px;background:linear-gradient(#c4d6ec 0,#b3c9e4 48%,#94b1d4 52%,#aac4e2 100%);box-shadow:inset 0 0 0 1px rgba(255,255,255,.55)"><div class="a" style="left:9px;top:8px;width:11px;height:4px;background:#f4f4f4;border:1px solid #5b6676;border-radius:1px"></div></div>
<div class="a" style="left:842px;top:10px;width:31px;height:17px;border:1px solid #5d7794;border-radius:3px;background:linear-gradient(#c4d6ec 0,#b3c9e4 48%,#94b1d4 52%,#aac4e2 100%);box-shadow:inset 0 0 0 1px rgba(255,255,255,.55)"><div class="a" style="left:9px;top:3px;width:11px;height:9px;background:#f4f4f4;border:1px solid #5b6676;border-radius:1px"><div class="a" style="left:2px;top:2px;width:5px;height:3px;background:#9fb6d2;border:1px solid #5b6676"></div></div></div>
<div class="a" style="left:875px;top:10px;width:31px;height:17px;border:1px solid #5e2a2a;border-radius:3px;background:linear-gradient(#e7b3a7 0,#d98573 48%,#c4432b 52%,#d36b4e 100%);box-shadow:inset 0 0 0 1px rgba(255,255,255,.4)"><svg class="a" style="left:8px;top:2px" width="13" height="11" viewBox="0 0 13 11"><path d="M1.5 1.500H4.500L6.500 3.800L8.500 1.500H11.500L8.200 5.500L11.500 9.500H8.500L6.500 7.200L4.500 9.500H1.500L4.800 5.500Z" fill="#f6f6f6" stroke="#5d3a3a" stroke-width="1"/></svg></div>

</body>
</html>
